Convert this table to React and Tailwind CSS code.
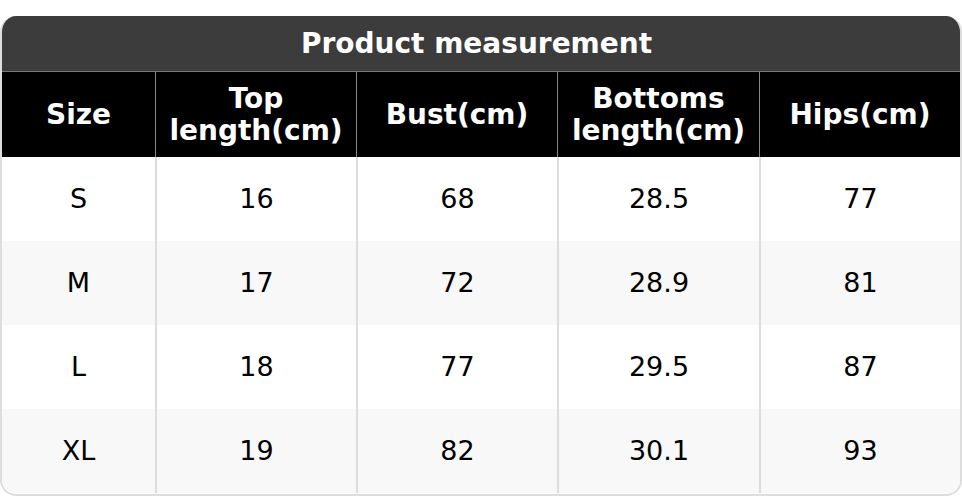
import React from "react";

const headers = [
  ["Size"],
  ["Top", "length(cm)"],
  ["Bust(cm)"],
  ["Bottoms", "length(cm)"],
  ["Hips(cm)"],
];

const rows = [
  ["S", "16", "68", "28.5", "77"],
  ["M", "17", "72", "28.9", "81"],
  ["L", "18", "77", "29.5", "87"],
  ["XL", "19", "82", "30.1", "93"],
];

const cols = "grid grid-cols-[153px_201px_201px_202px_1fr]";

export default function App() {
  return (
    <div className="w-[962px] h-[496px] bg-white pt-4" style={{ fontFamily: '"DejaVu Sans", sans-serif' }}>
      <div className="rounded-2xl overflow-hidden border-2 border-t-0 border-[#dddddd] h-[480px] flex flex-col">
        <div className="h-[56px] bg-[#3c3c3c] text-white font-bold text-[28px] flex items-center justify-center pr-[9px] border-b border-[#777777]">
          Product measurement
        </div>
        <div className={`${cols} h-[85px] bg-black text-white font-bold text-[28px] leading-[32px]`}>
          {headers.map((h, i) => (
            <div
              key={i}
              className={`flex flex-col items-center justify-center text-center ${i > 0 ? "border-l border-[#888888]" : ""}`}
            >
              {h.map((t, j) => (
                <span key={j}>{t}</span>
              ))}
            </div>
          ))}
        </div>
        {rows.map((r, ri) => (
          <div key={ri} className={`${cols} h-[84px] text-black text-[27px] ${ri % 2 === 1 ? "bg-[#f8f8f8]" : "bg-white"}`}>
            {r.map((c, ci) => (
              <div
                key={ci}
                className={`flex items-center justify-center ${ci > 0 ? "border-l-2 border-[#dddddd]" : ""}`}
              >
                {c}
              </div>
            ))}
          </div>
        ))}
      </div>
    </div>
  );
}
